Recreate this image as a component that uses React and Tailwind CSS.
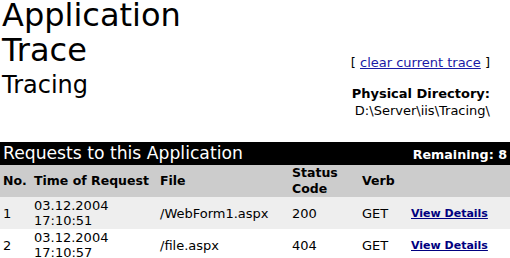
export default function App() {
  const font = { fontFamily: '"DejaVu Sans", Verdana, sans-serif' };
  const rows = [
    { no: "1", date: "03.12.2004", time: "17:10:51", file: "/WebForm1.aspx", code: "200", verb: "GET", bg: "bg-[#eeeeee]" },
    { no: "2", date: "03.12.2004", time: "17:10:57", file: "/file.aspx", code: "404", verb: "GET", bg: "bg-white" },
  ];
  const cols = "grid grid-cols-[31px_126px_132px_70px_49px_1fr]";
  return (
    <div className="w-[510px] h-[258px] overflow-hidden bg-white text-black" style={font}>
      {/* page heading + trace controls */}
      <div className="flex justify-between h-[142px]">
        <div className="pl-[2px]">
          <div className="text-[32px] leading-[31px]">Application</div>
          <div className="mt-[2px] text-[32px] leading-[35px]">Trace</div>
          <div className="mt-[3px] text-[24px] leading-[28px]">Tracing</div>
        </div>
        <div className="flex flex-col items-end pr-[20px] pt-[54px] text-[13px] leading-[17px]">
          <div>
            [ <a href="#" className="text-[#1a1aa6] underline">clear current trace</a> ]
          </div>
          <div className="mt-[14px] font-bold">Physical Directory:</div>
          <div>D:\Server\iis\Tracing\</div>
        </div>
      </div>

      {/* requests table */}
      <div className="flex items-center justify-between h-[23px] bg-black text-white px-[3px]">
        <span className="text-[17.2px] leading-[20px] -mt-[2px]">Requests to this Application</span>
        <span className="text-[12.7px] font-bold mt-[3px]">Remaining: 8</span>
      </div>
      <div className={`${cols} h-[32px] bg-[#cccccc] items-center text-[12.5px] font-bold leading-[16px]`}>
        <div className="pl-[3px]">No.</div>
        <div className="pl-[3px]">Time of Request</div>
        <div className="pl-[3px]">File</div>
        <div className="pl-[3px]">Status<br />Code</div>
        <div className="pl-[3px]">Verb</div>
        <div></div>
      </div>
      {rows.map((r) => (
        <div key={r.no} className={`${cols} h-[32px] ${r.bg} items-center text-[13px] leading-[15px]`}>
          <div className="pl-[3px]">{r.no}</div>
          <div className="pl-[3px]">{r.date}<br />{r.time}</div>
          <div className="pl-[3px]">{r.file}</div>
          <div className="pl-[3px]">{r.code}</div>
          <div className="pl-[3px]">{r.verb}</div>
          <div className="pl-[3px]">
            <a href="#" className="text-[11px] font-bold text-[#000080] underline">View Details</a>
          </div>
        </div>
      ))}
    </div>
  );
}
